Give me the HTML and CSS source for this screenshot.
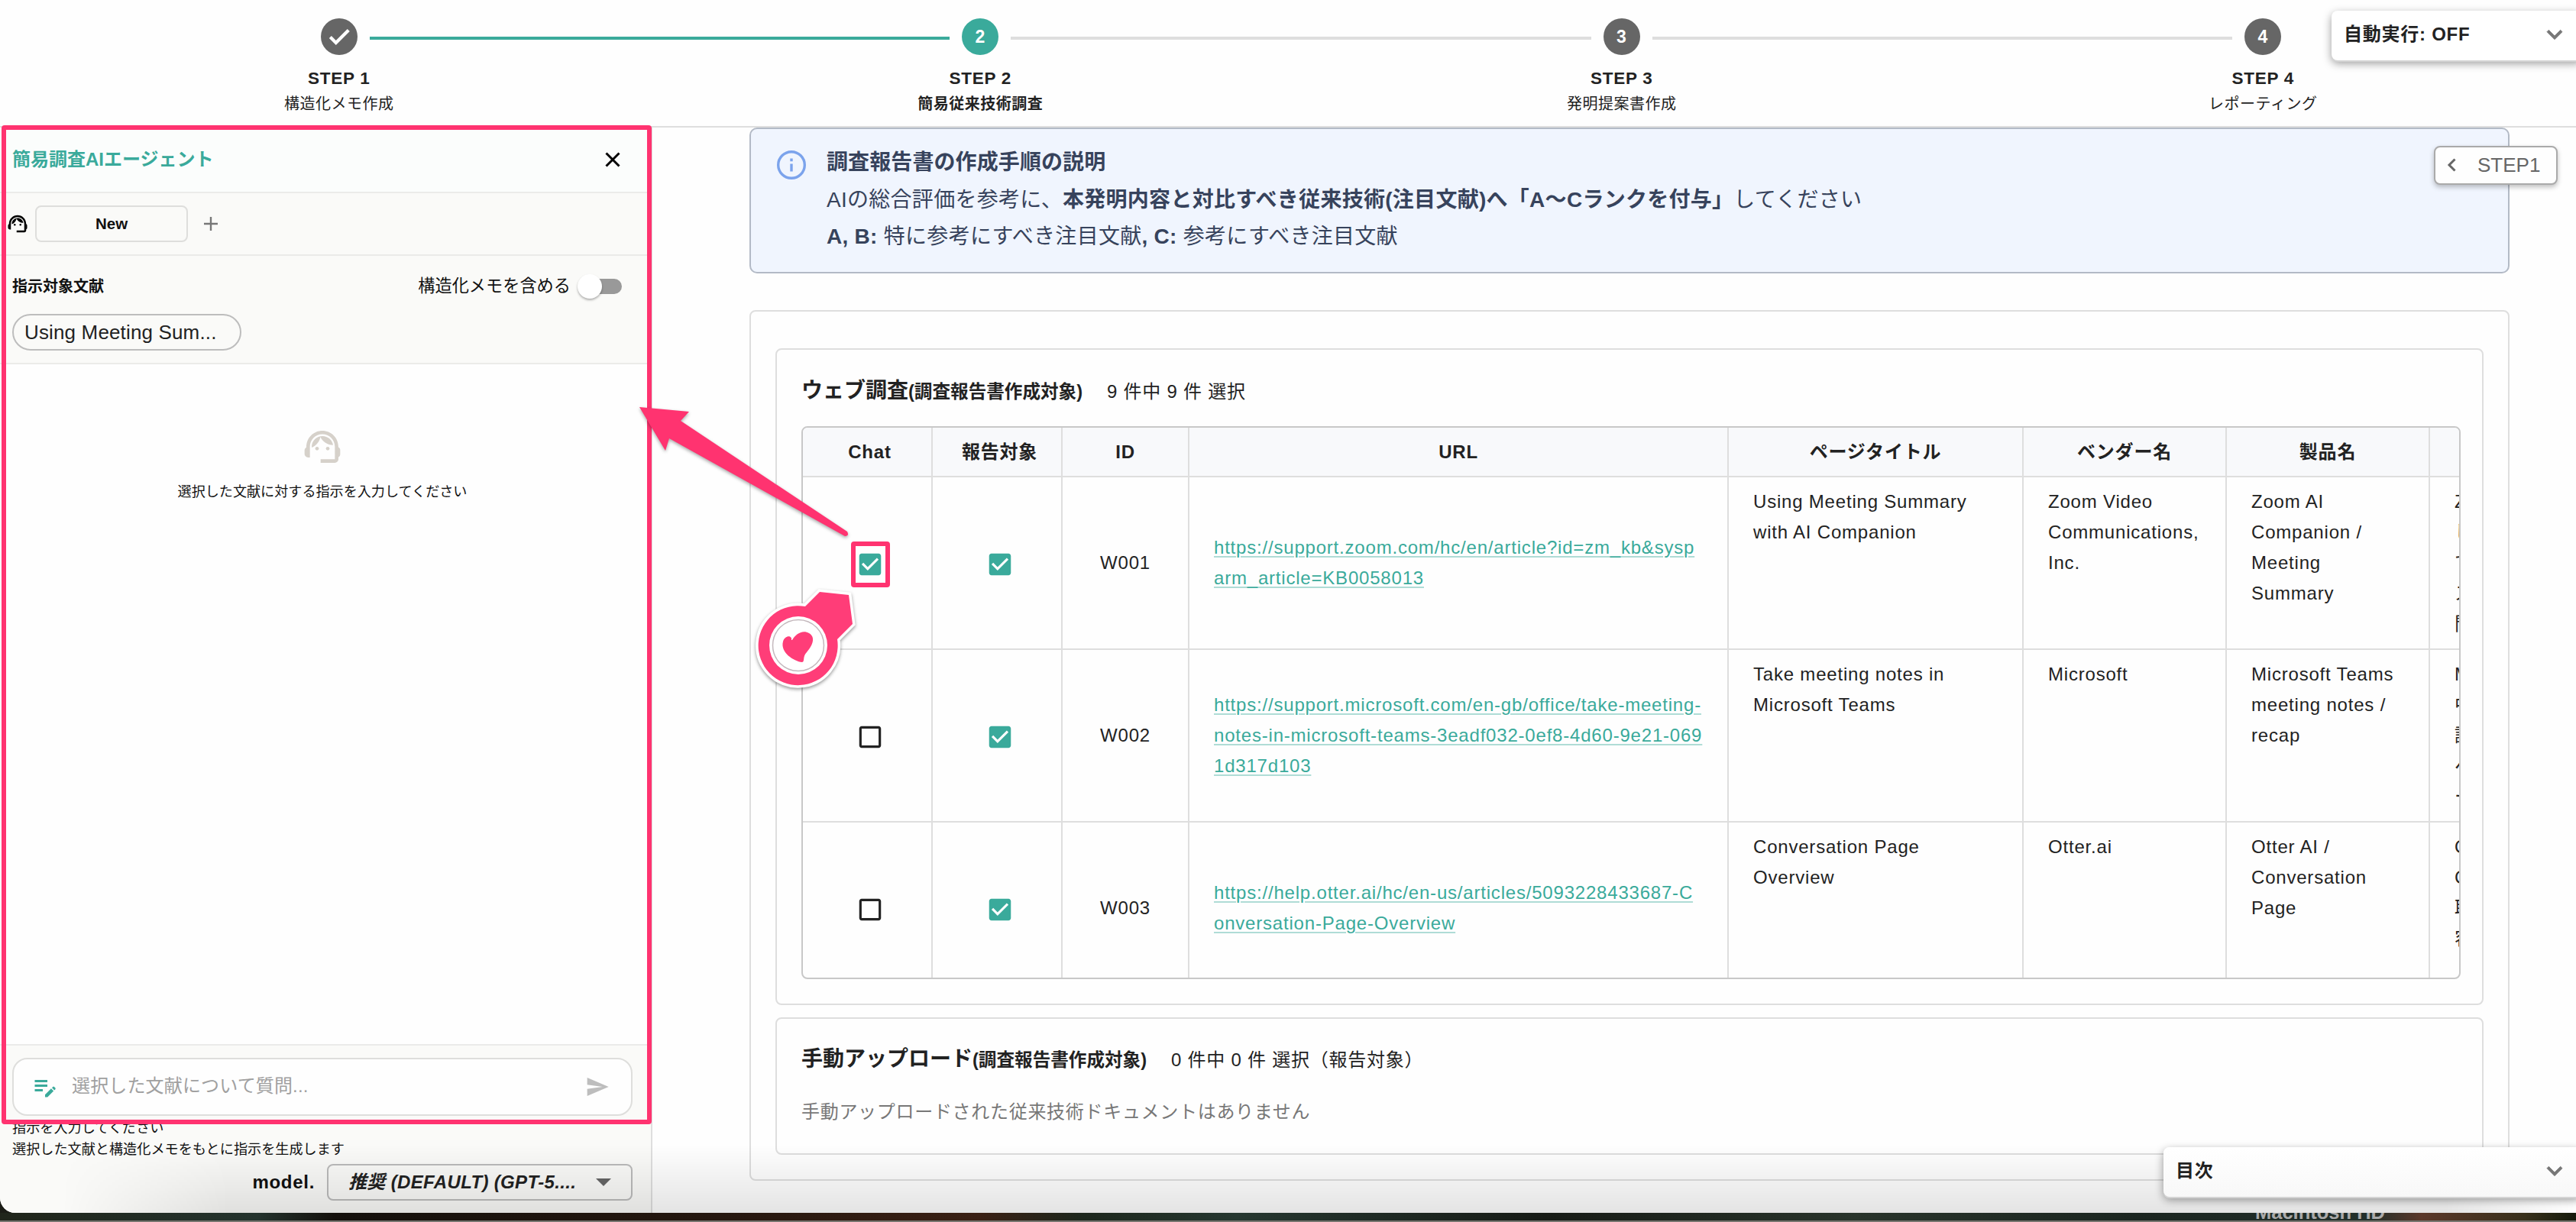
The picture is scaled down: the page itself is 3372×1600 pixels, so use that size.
FILE: index.html
```
<!DOCTYPE html>
<html lang="ja">
<head>
    <meta charset="UTF-8">
    <title>簡易従来技術調査</title>
    <link rel="stylesheet" href="styles.css">
</head>

<body>
    <svg class="defs">
        <symbol id="agent" viewBox="0 0 24 24">
            <path d="M21 12.22C21 6.73 16.74 3 12 3c-4.69 0-9 3.65-9 9.28-.6.34-1 .98-1 1.72v2c0 1.1.9 2 2 2h1v-6.1c0-3.87 3.13-7 7-7s7 3.13 7 7V19h-8v2h8c1.1 0 2-.9 2-2v-1.22c.59-.31 1-.92 1-1.64v-2.3c0-.7-.41-1.31-1-1.62z"/>
            <circle cx="9" cy="13" r="1"/><circle cx="15" cy="13" r="1"/>
            <path d="M18 11.03C17.52 8.18 15.04 6 12.05 6c-3.03 0-6.29 2.51-6.03 6.45 2.47-1.01 4.33-3.21 4.86-5.89 1.31 2.63 4 4.44 7.12 4.47z"/>
        </symbol>
        <symbol id="checked" viewBox="0 0 24 24">
            <path d="M19 3H5c-1.11 0-2 .9-2 2v14c0 1.1.89 2 2 2h14c1.11 0 2-.9 2-2V5c0-1.1-.89-2-2-2zm-9 14l-5-5 1.41-1.41L10 14.17l7.59-7.59L19 8l-9 9z"/>
        </symbol>
        <symbol id="blank" viewBox="0 0 24 24">
            <path d="M19 5v14H5V5h14m0-2H5c-1.1 0-2 .9-2 2v14c0 1.1.9 2 2 2h14c1.1 0 2-.9 2-2V5c0-1.1-.9-2-2-2z"/>
        </symbol>
        <symbol id="down" viewBox="0 0 24 24">
            <path d="M7.41 8.59L12 13.17l4.59-4.58L18 10l-6 6-6-6z"/>
        </symbol>
    </svg>

    <div class="window">
        <header class="stepper">
            <div class="step">
                <span class="num"><svg viewBox="0 0 24 24"><path d="M9 16.17L4.83 12l-1.42 1.41L9 19 21 7l-1.41-1.41z"/></svg></span>
                <b>STEP 1</b>
                <p>構造化メモ作成</p>
            </div>
            <div class="step active">
                <i class="line"></i>
                <span class="num">2</span>
                <b>STEP 2</b>
                <p>簡易従来技術調査</p>
            </div>
            <div class="step">
                <i class="line"></i>
                <span class="num">3</span>
                <b>STEP 3</b>
                <p>発明提案書作成</p>
            </div>
            <div class="step">
                <i class="line"></i>
                <span class="num">4</span>
                <b>STEP 4</b>
                <p>レポーティング</p>
            </div>
        </header>

        <div class="body">
            <aside class="agent">
                <div class="agent-head">
                    <h2>簡易調査AIエージェント</h2>
                    <svg class="close" viewBox="0 0 20 20"><path d="M1.5 1.5l17 17M18.5 1.5l-17 17"/></svg>
                </div>
                <div class="tabs">
                    <svg class="tabs-icon"><use href="#agent"/></svg>
                    <button class="tab">New</button>
                    <svg class="plus" viewBox="0 0 18 18"><path d="M9 0v18M0 9h18"/></svg>
                </div>
                <div class="target">
                    <div class="target-row">
                        <b>指示対象文献</b>
                        <span class="memo">構造化メモを含める</span>
                        <span class="switch"><i></i></span>
                    </div>
                    <span class="chip">Using Meeting Sum...</span>
                </div>
                <div class="empty">
                    <svg><use href="#agent"/></svg>
                    <p>選択した文献に対する指示を入力してください</p>
                </div>
                <div class="foot">
                    <div class="ask">
                        <svg class="note" viewBox="0 0 24 24"><path d="M3 10h11v2H3v-2zm0-2h11V6H3v2zm0 8h7v-2H3v2zm15.01-3.13.71-.71c.39-.39 1.02-.39 1.41 0l.71.71c.39.39.39 1.02 0 1.41l-.71.71-2.12-2.12zm-.71.71-5.3 5.3V21h2.12l5.3-5.3-2.12-2.12z"/></svg>
                        <span>選択した文献について質問...</span>
                        <svg class="send" viewBox="0 0 24 24"><path d="M2.01 21L23 12 2.01 3 2 10l15 2-15 2z"/></svg>
                    </div>
                    <p class="hint">指示を入力してください</p>
                    <p class="hint">選択した文献と構造化メモをもとに指示を生成します</p>
                    <div class="model">
                        <b>model.</b>
                        <div class="select"><span>推奨 (DEFAULT) (GPT-5....</span><i></i></div>
                    </div>
                </div>
            </aside>

            <main>
                <section class="info">
                    <svg viewBox="0 0 36 36"><circle cx="18" cy="18" r="16.4"/><path d="M18 16.5v9.5M18 10v3.4"/></svg>
                    <div>
                        <h3>調査報告書の作成手順の説明</h3>
                        <p>AIの総合評価を参考に、<b>本発明内容と対比すべき従来技術(注目文献)へ「A〜Cランクを付与」</b>してください</p>
                        <p><b>A, B:</b> 特に参考にすべき注目文献<b>, C:</b> 参考にすべき注目文献</p>
                    </div>
                </section>

                <section class="outer">
                    <div class="card web">
                        <h3>ウェブ調査<small>(調査報告書作成対象)</small><span>9 件中 9 件 選択</span></h3>
                        <div class="scroll">
                            <table>
                                <colgroup>
                                    <col class="c1"><col class="c1"><col class="c3"><col class="c4"><col class="c5"><col class="c6"><col class="c6"><col class="c8">
                                </colgroup>
                                <tr>
                                    <th class="ck">Chat</th><th class="ck">報告対象</th><th>ID</th><th>URL</th><th>ページタイトル</th><th>ベンダー名</th><th>製品名</th><th></th>
                                </tr>
                                <tr>
                                    <td class="ck"><svg class="on"><use href="#checked"/></svg></td>
                                    <td class="ck"><svg class="on"><use href="#checked"/></svg></td>
                                    <td class="id">W001</td>
                                    <td class="url"><a href="#">https://support.zoom.com/hc/en/article?id=zm_kb&amp;sysp<br>arm_article=KB0058013</a></td>
                                    <td>Using Meeting Summary<br>with AI Companion</td>
                                    <td>Zoom Video<br>Communications,<br>Inc.</td>
                                    <td>Zoom AI<br>Companion /<br>Meeting<br>Summary</td>
                                    <td>Z<br>し<br>て<br>ス<br>問</td>
                                </tr>
                                <tr>
                                    <td class="ck"><svg><use href="#blank"/></svg></td>
                                    <td class="ck"><svg class="on"><use href="#checked"/></svg></td>
                                    <td class="id">W002</td>
                                    <td class="url"><a href="#">https://support.microsoft.com/en-gb/office/take-meeting-<br>notes-in-microsoft-teams-3eadf032-0ef8-4d60-9e21-069<br>1d317d103</a></td>
                                    <td>Take meeting notes in<br>Microsoft Teams</td>
                                    <td>Microsoft</td>
                                    <td>Microsoft Teams<br>meeting notes /<br>recap</td>
                                    <td>M<br>中<br>議<br>へ<br>ー</td>
                                </tr>
                                <tr>
                                    <td class="ck"><svg><use href="#blank"/></svg></td>
                                    <td class="ck"><svg class="on"><use href="#checked"/></svg></td>
                                    <td class="id">W003</td>
                                    <td class="url"><a href="#">https://help.otter.ai/hc/en-us/articles/5093228433687-C<br>onversation-Page-Overview</a></td>
                                    <td>Conversation Page<br>Overview</td>
                                    <td>Otter.ai</td>
                                    <td>Otter AI /<br>Conversation<br>Page</td>
                                    <td>O<br>C<br>取<br>容</td>
                                </tr>
                            </table>
                        </div>
                    </div>
                    <div class="card manual">
                        <h3>手動アップロード<small>(調査報告書作成対象)</small><span>0 件中 0 件 選択（報告対象）</span></h3>
                        <p>手動アップロードされた従来技術ドキュメントはありません</p>
                    </div>
                </section>
            </main>
        </div>

        <div class="shade"></div>
        <button class="back"><svg viewBox="0 0 12 18"><path d="M10.5 1.5L3 9l7.5 7.5"/></svg>STEP1</button>
        <div class="float auto">自動実行: OFF<svg><use href="#down"/></svg></div>
        <div class="float toc">目次<svg><use href="#down"/></svg></div>
    </div>

    <div class="desktop"><span>Macintosh HD</span></div>

    <!-- 注釈 -->
    <svg class="marks" viewBox="0 0 3372 1600">
        <rect x="5" y="167" width="845" height="1302" rx="1"/>
        <rect x="1117" y="712" width="45" height="54" rx="1"/>
        <path class="arrow" d="M837 533L902 539 891 551 1109 696Q1112 702 1106 702L876 574 871 590z"/>
        <g class="pin">
            <path class="edge" d="M1073 775L1111 779 1116 817 1096 837A52 52 0 1 1 1054 794z"/>
            <path d="M1073 775L1111 779 1116 817 1096 837A52 52 0 1 1 1054 794z"/>
        </g>
        <circle class="ring" cx="1045" cy="845" r="38"/>
        <circle class="hole" cx="1045" cy="845" r="33.5"/>
        <path class="heart" d="M1036 838C1037 831 1027 832 1025 840C1021 854 1039 866 1050 867C1054 866 1050 860 1056 854C1064 845 1068 834 1059 829C1050 824 1041 831 1037 838z"/>
    </svg>
</body>

</html>
```
FILE: styles.css
```
*{
    margin: 0;
    padding: 0;
    box-sizing: border-box;
}
body{
    position: relative;
    width: 3372px;
    height: 1600px;
    overflow: hidden;
    background: #1b1c16;
    color: #222;
    font: 24px/40px "Liberation Sans","Noto Sans CJK JP",sans-serif;
}
svg{
    display: block;
    flex: none;
    fill: currentColor;
}
button{
    font: inherit;
}
.defs{
    position: absolute;
    width: 0;
    height: 0;
}
.window{
    position: relative;
    display: flex;
    flex-direction: column;
    height: 1588px;
    overflow: hidden;
    background: #fefefe;
    border-bottom-left-radius: 20px;
}

/* ステッパー */
.stepper{
    flex: none;
    display: grid;
    grid-template-columns: repeat(4,839.5px);
    height: 167px;
    padding: 24px 0 0 24px;
    border-bottom: 2px solid #dedede;
}
.step{
    position: relative;
    display: flex;
    flex-direction: column;
    align-items: center;
    font-size: 20px;
    line-height: 30px;
    letter-spacing: .5px;
}
.step b{
    margin-top: 16px;
    font-size: 22.5px;
    letter-spacing: .7px;
}
.step p{
    margin-top: 3px;
}
.step.active p{
    font-weight: bold;
}
.num{
    width: 48px;
    height: 48px;
    border-radius: 50%;
    background: #666;
    color: #fff;
    font-size: 23px;
    font-weight: bold;
    line-height: 48px;
    text-align: center;
}
.num svg{
    width: 34px;
    margin: 7px;
    stroke: #fff;
}
.active .num,.active .line{
    background: #3aaa9b;
}
.line{
    position: absolute;
    top: 24px;
    left: calc(-50% + 40px);
    right: calc(50% + 40px);
    height: 4px;
    background: #dedede;
}

.body{
    flex: 1;
    display: flex;
    min-height: 0;
}

/* 左パネル */
.agent{
    display: flex;
    flex-direction: column;
    width: 854px;
    border-right: 2px solid #dedede;
    background: #fafaf8;
    color: #111;
}
.agent-head,.tabs,.target{
    border-bottom: 2px solid #ebebe9;
}
.agent-head{
    display: flex;
    align-items: center;
    justify-content: space-between;
    height: 86px;
    padding: 0 40px 0 16px;
    background: #fbfdfc;
}
.agent-head h2{
    color: #3aaa9b;
    font-size: 24px;
}
.close{
    width: 20px;
    stroke: #000;
    stroke-width: 3;
}
.tabs{
    display: flex;
    align-items: center;
    height: 82px;
    padding-left: 8px;
}
.tabs-icon{
    width: 30px;
    height: 30px;
    color: #000;
}
.tab{
    width: 200px;
    height: 48px;
    margin: 0 21px 0 8px;
    border: 2px solid #dededc;
    border-radius: 8px;
    background: none;
    color: #111;
    font-size: 20.5px;
    font-weight: bold;
}
.plus{
    width: 18px;
    stroke: #777;
    stroke-width: 2.4;
}
.target{
    height: 142px;
    padding: 20px 38px 0 16px;
}
.target-row{
    display: flex;
    align-items: center;
    font-size: 20px;
}
.memo{
    margin-left: auto;
    font-size: 22.2px;
}
.switch{
    width: 58px;
    height: 20px;
    margin-left: 9px;
    padding-left: 14px;
    border-radius: 10px;
    background: linear-gradient(#999,#999) 16px 0 no-repeat;
}
.switch i{
    display: block;
    width: 32px;
    height: 32px;
    margin: -6px 0 0 -14px;
    border-radius: 50%;
    background: #fff;
    box-shadow: 0 2px 3px rgba(0,0,0,.3);
}
.chip{
    display: block;
    width: 300px;
    height: 48px;
    margin-top: 16px;
    padding-left: 14px;
    border: 2px solid #bdbdbd;
    border-radius: 24px;
    color: #222;
    font-size: 26px;
    letter-spacing: .15px;
    line-height: 44px;
}
.empty{
    flex: 1;
    display: flex;
    flex-direction: column;
    align-items: center;
    padding: 80px 8px 0 0;
    background: #fefefe;
    font-size: 18.1px;
}
.empty svg{
    width: 56px;
    height: 56px;
    margin-bottom: 11px;
    color: #d6d1ca;
}
.foot{
    height: 221px;
    padding: 16px 24px 0 16px;
    border-top: 2px solid #ebebe9;
}
.ask{
    display: flex;
    align-items: center;
    height: 76px;
    margin-bottom: 2px;
    padding: 0 28px 0 23px;
    border: 2px solid #dededc;
    border-radius: 20px;
    background: #fefefe;
    color: #a0a0a0;
}
.ask span{
    margin-top: -2px;
    letter-spacing: .15px;
}
.note{
    width: 36px;
    height: 36px;
    margin-right: 17px;
    color: #3aaa9b;
}
.send{
    width: 32px;
    height: 32px;
    margin-left: auto;
    color: #bdbdbd;
}
.hint{
    font-size: 18.15px;
    line-height: 28px;
}
.model{
    display: flex;
    align-items: center;
    justify-content: flex-end;
    gap: 16px;
    margin-top: 5px;
    letter-spacing: .7px;
}
.select{
    display: flex;
    align-items: center;
    justify-content: space-between;
    width: 400px;
    height: 48px;
    padding: 0 26px;
    border: 2px solid #bbb;
    border-radius: 8px;
    color: #222;
    font-weight: bold;
    font-style: italic;
    letter-spacing: .35px;
}
.select i{
    border: 10px solid transparent;
    border-top-color: #666;
    border-bottom: 0;
}

/* 右側 */
main{
    width: 2304px;
    margin-left: 127px;
}
.info{
    display: flex;
    height: 191px;
    padding: 20px 0 0 34px;
    border: 2px solid #b3bac6;
    border-radius: 10px;
    background: #f0f5fe;
    color: #37435c;
    font-size: 28px;
    line-height: 48.5px;
    letter-spacing: .28px;
}
.info svg{
    width: 38px;
    height: 38px;
    margin: 8px 27px 0 0;
    fill: none;
    stroke: #7ba3ec;
    stroke-width: 3.2;
}
.info h3{
    font-size: 28px;
    letter-spacing: .1px;
}
.outer{
    height: 1140px;
    margin-top: 48px;
    padding: 48px 32px 0;
    border: 2px solid #dedede;
    border-radius: 8px;
}
.card{
    padding: 34px 28px 0 32px;
    border: 2px solid #dedede;
    border-radius: 8px;
}
.web{
    height: 860px;
}
.manual{
    height: 180px;
    margin-top: 16px;
    padding-top: 33px;
}
.card h3{
    display: flex;
    align-items: baseline;
    height: 40px;
    font-size: 28px;
    line-height: 40px;
}
.card small{
    font-size: 23.6px;
}
.card h3 span{
    margin-left: 32px;
    font-size: 24px;
    font-weight: normal;
    letter-spacing: .75px;
}
.manual p{
    margin-top: 29px;
    color: #777;
    letter-spacing: .7px;
}
.scroll{
    width: 2172px;
    height: 724px;
    margin-top: 26px;
    border: 2px solid #c8c8c8;
    border-radius: 8px;
    overflow: hidden;
}
table{
    table-layout: fixed;
    width: 2428px;
    border-collapse: separate;
    border-spacing: 0;
    letter-spacing: .8px;
}
.c1{width: 170px;}
.c3{width: 166px;}
.c4{width: 706px;}
.c5{width: 386px;}
.c6{width: 266px;}
.c8{width: 298px;}
th,td{
    border-right: 2px solid #dedede;
    border-bottom: 2px solid #dedede;
}
th{
    height: 65px;
    background: #f8f9fb;
}
td{
    height: 226px;
    padding: 12px 0 0 32px;
    vertical-align: top;
}
.ck{
    padding: 0 0 0 7px;
    vertical-align: middle;
}
td.ck{
    padding-top: 3px;
}
.ck svg{
    width: 38px;
    height: 38px;
    margin: 0 auto;
}
.ck .on{
    color: #3aaa9b;
}
.id{
    padding: 0;
    text-align: center;
    vertical-align: middle;
}
.url{
    padding: 0 0 0 32px;
    vertical-align: middle;
    white-space: nowrap;
}
.url a{
    color: #3aaa9b;
    text-decoration: underline 2px rgba(58,170,155,.4);
    text-underline-offset: 3px;
}

/* 浮いている部品 */
.back{
    position: absolute;
    top: 191px;
    left: 3186px;
    display: flex;
    align-items: center;
    gap: 28px;
    width: 162px;
    height: 51px;
    padding: 0 0 2px 15px;
    border: 2px solid #aaa;
    border-radius: 8px;
    background: #fefefe;
    box-shadow: 0 3px 6px rgba(0,0,0,.25);
    color: #666;
    font-size: 26px;
}
.back svg{
    width: 12px;
    fill: none;
    stroke: #666;
    stroke-width: 3;
}
.float{
    position: absolute;
    left: 3052px;
    right: -8px;
    display: flex;
    justify-content: space-between;
    align-items: center;
    height: 65px;
    padding: 0 16px 4px 16px;
    border-radius: 8px;
    background: #fff;
    box-shadow: 0 2px 0 #d4d4d4,0 4px 12px rgba(0,0,0,.4);
    font-weight: bold;
    letter-spacing: .75px;
}
.float svg{
    width: 40px;
    height: 40px;
    color: #777;
    stroke: #777;
    stroke-width: .5;
}
.auto{
    top: 14px;
}
.toc{
    top: 1502px;
    left: 2832px;
    background: linear-gradient(#fff,#f8f8f8);
}
.shade{
    position: absolute;
    left: 0;
    right: 0;
    bottom: 0;
    height: 90px;
    background: linear-gradient(transparent,rgba(0,0,0,.1));
    mask-image: linear-gradient(90deg,transparent 80px,#000 300px,#000 3200px,transparent);
}
.desktop{
    height: 12px;
    overflow: hidden;
    background: linear-gradient(90deg,#20251b,#24332d 10%,#14100c 13%,#25170f 28%,#3a2014 38%,#1d271d 42%,#263730 48%,#171b16 60%,#29342b 72%,#1b2520 83%,#23302b 92%,#5b382a 94%,#38301b 98%,#151a0c);
    border-bottom: 2px solid #77756f;
}
.desktop span{
    display: block;
    width: 300px;
    margin: -21px 0 0 2887px;
    color: #aaa;
    font-size: 25.5px;
    font-weight: bold;
    text-align: center;
}

/* 注釈 */
.marks{
    position: absolute;
    top: 0;
    left: 0;
    width: 3372px;
    height: 1600px;
    fill: #ff3370;
}
.marks rect{
    fill: none;
    stroke: #ff3370;
    stroke-width: 6;
}
.arrow{
    filter: drop-shadow(0 2px 2px rgba(0,0,0,.35));
}
.pin{
    fill: #ff3d78;
    filter: drop-shadow(0 2px 2px rgba(0,0,0,.4));
}
.edge{
    stroke: #fff;
    stroke-width: 7;
}
.ring{
    fill: #fff;
}
.hole{
    fill: #fff;
    stroke: #c4b8bd;
    stroke-width: 1.5;
}
.heart{
    fill: #ff3d78;
}
```
